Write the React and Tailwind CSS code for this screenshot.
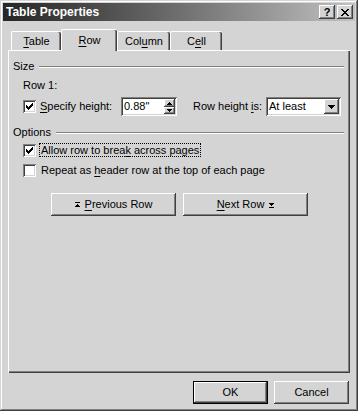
import React from "react";

const raised =
  "shadow-[inset_-1px_-1px_0_#404040,inset_1px_1px_0_#ffffff,inset_-2px_-2px_0_#808080,inset_2px_2px_0_#d4d4d4]";
const sunken =
  "shadow-[inset_1px_1px_0_#808080,inset_-1px_-1px_0_#ffffff,inset_2px_2px_0_#404040,inset_-2px_-2px_0_#d4d4d4]";

function Check() {
  return (
    <svg width="7" height="7" viewBox="0 0 7 7" shapeRendering="crispEdges">
      <path
        d="M6 0h1v1h-1z M5 1h2v1h-2z M0 2h1v1h-1z M4 2h3v1h-3z M0 3h2v1h-2z M3 3h3v1h-3z M0 4h5v1h-5z M1 5h3v1h-3z M2 6h1v1h-1z"
        fill="#000"
      />
    </svg>
  );
}

function Checkbox({ checked }) {
  return (
    <span
      className={`w-[13px] h-[13px] shrink-0 bg-white flex items-center justify-center ${sunken}`}
    >
      {checked && <Check />}
    </span>
  );
}

function U({ children }) {
  return <span className="underline underline-offset-[2px]">{children}</span>;
}

function Tab({ children, selected, w }) {
  return (
    <div
      className={`${w} ${
        selected ? "h-[22px] -mb-[1px] z-10 pt-[1px]" : "h-[19px]"
      } relative bg-[#d4d4d4] border-l border-t border-white rounded-tl-[2px] rounded-tr-[2px] shadow-[inset_-1px_0_0_#404040,inset_-2px_0_0_#808080] flex items-center justify-center text-black`}
    >
      <span className={selected ? "-mt-[2px]" : ""}>{children}</span>
    </div>
  );
}

function GroupLabel({ children }) {
  return (
    <div className="flex items-center h-[13px] pl-[4px] pr-[6px]">
      <span>{children}</span>
      <div className="flex-1 ml-[5px] h-[2px] border-t border-[#808080] border-b border-b-white" />
    </div>
  );
}

function UpArrow() {
  return (
    <svg width="5" height="3" viewBox="0 0 5 3" shapeRendering="crispEdges">
      <path d="M2 0h1v1h-1z M1 1h3v1h-3z M0 2h5v1h-5z" fill="#000" />
    </svg>
  );
}
function DownArrow() {
  return (
    <svg width="5" height="3" viewBox="0 0 5 3" shapeRendering="crispEdges">
      <path d="M0 0h5v1h-5z M1 1h3v1h-3z M2 2h1v1h-1z" fill="#000" />
    </svg>
  );
}

export default function App() {
  return (
    <div
      className={`w-[358px] h-[411px] bg-[#d4d4d4] flex flex-col font-['Liberation_Sans',Arial,sans-serif] text-[11px] leading-[13px] text-black shadow-[inset_-1px_-1px_0_#404040,inset_1px_1px_0_#d4d4d4,inset_-2px_-2px_0_#808080,inset_2px_2px_0_#ffffff] p-[3px]`}
    >
      {/* title bar */}
      <div className="h-[18px] flex items-center justify-between bg-gradient-to-r from-[#262626] to-[#c2c2c2] pl-[3px] pr-[2px]">
        <span className="text-white font-bold text-[12px] leading-[14px]">
          Table Properties
        </span>
        <div className="flex gap-[2px]">
          <div
            className={`w-[16px] h-[14px] bg-[#d4d4d4] ${raised} flex items-center justify-center font-bold text-[11px] leading-[11px]`}
          >
            ?
          </div>
          <div
            className={`w-[16px] h-[14px] bg-[#d4d4d4] ${raised} flex items-center justify-center`}
          >
            <svg width="8" height="7" viewBox="0 0 8 7" shapeRendering="crispEdges">
              <path
                d="M0 0h2v1h-2z M6 0h2v1h-2z M1 1h2v1h-2z M5 1h2v1h-2z M2 2h4v1h-4z M3 3h2v1h-2z M2 4h4v1h-4z M1 5h2v1h-2z M5 5h2v1h-2z M0 6h2v1h-2z M6 6h2v1h-2z"
                fill="#000"
              />
            </svg>
          </div>
        </div>
      </div>

      {/* body */}
      <div className="flex-1 flex flex-col px-[5px] pt-[8px]">
        <div className="flex items-end pl-[3px]">
          <Tab w="w-[50px]">
            <U>T</U>able
          </Tab>
          <Tab w="w-[56px]" selected>
            <U>R</U>ow
          </Tab>
          <Tab w="w-[53px]">
            Col<U>u</U>mn
          </Tab>
          <Tab w="w-[52px]">
            C<U>e</U>ll
          </Tab>
        </div>

        {/* panel */}
        <div className="h-[323px] border-l border-t border-white shadow-[inset_-1px_-1px_0_#404040,inset_-2px_-2px_0_#808080] flex flex-col">
          <div className="mt-[9px]">
            <GroupLabel>Size</GroupLabel>
          </div>
          <div className="mt-[6px] h-[13px] pl-[14px]">Row 1:</div>
          <div className="mt-[5px] h-[19px] pl-[14px] flex items-center">
            <Checkbox checked />
            <span className="ml-[4px] w-[81px]">
              <U>S</U>pecify height:
            </span>
            <div
              className={`w-[56px] h-[19px] bg-white ${sunken} flex items-center pl-[3px] pr-[2px]`}
            >
              <span className="flex-1">0.88"</span>
              <div className="flex flex-col w-[11px] h-[15px]">
                <div className={`h-[8px] bg-[#d4d4d4] ${raised} flex items-center justify-center`}>
                  <UpArrow />
                </div>
                <div className={`h-[7px] bg-[#d4d4d4] ${raised} flex items-center justify-center`}>
                  <DownArrow />
                </div>
              </div>
            </div>
            <span className="ml-[16px] w-[73px]">
              Row height <U>i</U>s:
            </span>
            <div
              className={`w-[75px] h-[19px] bg-white ${sunken} flex items-center pl-[3px] pr-[2px]`}
            >
              <span className="flex-1">At least</span>
              <div
                className={`w-[15px] h-[15px] bg-[#d4d4d4] ${raised} flex items-center justify-center`}
              >
                <svg width="7" height="4" viewBox="0 0 7 4" shapeRendering="crispEdges">
                  <path d="M0 0h7v1h-7z M1 1h5v1h-5z M2 2h3v1h-3z M3 3h1v1h-1z" fill="#000" />
                </svg>
              </div>
            </div>
          </div>
          <div className="mt-[10px]">
            <GroupLabel>Options</GroupLabel>
          </div>
          <div className="mt-[4px] h-[14px] pl-[14px] flex items-center">
            <Checkbox checked />
            <span className="ml-[3px] border border-dotted border-black px-[1px] leading-[12px]">
              Allow row to brea<U>k</U> across pages
            </span>
          </div>
          <div className="mt-[6px] h-[14px] pl-[14px] flex items-center">
            <Checkbox />
            <span className="ml-[5px]">
              Repeat as <U>h</U>eader row at the top of each page
            </span>
          </div>
          <div className="mt-[16px] flex pl-[42px] gap-[7px]">
            <div
              className={`w-[125px] h-[23px] ${raised} flex items-center justify-center gap-[5px]`}
            >
              <svg width="5" height="6" viewBox="0 0 5 6" shapeRendering="crispEdges">
                <path d="M0 0h5v1h-5z M2 2h1v1h-1z M1 3h3v1h-3z M0 4h5v1h-5z" fill="#000" />
              </svg>
              <span>
                <U>P</U>revious Row
              </span>
            </div>
            <div
              className={`w-[125px] h-[23px] ${raised} flex items-center justify-center gap-[5px]`}
            >
              <span>
                <U>N</U>ext Row
              </span>
              <svg width="5" height="6" viewBox="0 0 5 6" shapeRendering="crispEdges">
                <path d="M0 1h5v1h-5z M1 2h3v1h-3z M2 3h1v1h-1z M0 5h5v1h-5z" fill="#000" />
              </svg>
            </div>
          </div>
        </div>

        {/* bottom buttons */}
        <div className="mt-[8px] flex justify-end gap-[6px] pr-[1px]">
          <div className="w-[75px] h-[23px] border border-black">
            <div
              className={`w-full h-full ${raised} flex items-center justify-center`}
            >
              OK
            </div>
          </div>
          <div
            className={`w-[75px] h-[23px] ${raised} flex items-center justify-center`}
          >
            Cancel
          </div>
        </div>
      </div>
    </div>
  );
}
